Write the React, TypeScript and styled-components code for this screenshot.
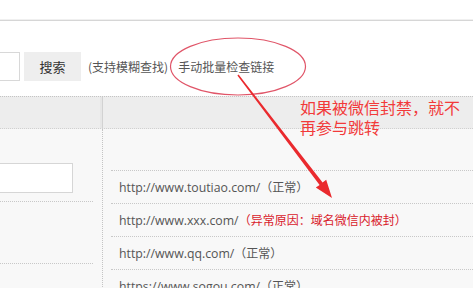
import React from "react";
import styled, { createGlobalStyle } from "styled-components";

const Global = createGlobalStyle`
  html, body { margin: 0; padding: 0; background: #ffffff; }
  body { font-family: "Open Sans", "Noto Sans CJK SC", sans-serif; overflow: hidden; }
  #root { width: 473px; height: 288px; position: relative; overflow: hidden; }
`;

const Page = styled.div`
  position: relative;
  width: 473px;
  height: 288px;
  overflow: hidden;
  background: #ffffff;
`;

const TopBar = styled.div`
  height: 19px;
  border-bottom: 1px solid #f0f0f0;
  box-shadow: 0 1px 0 #d6d6d6;
`;

const SearchRow = styled.div`
  display: flex;
  align-items: center;
  margin-top: 32px;
  height: 29px;
`;

const SearchInput = styled.div`
  box-sizing: border-box;
  width: 20px;
  height: 29px;
  background: #fff;
  border: 1px solid #d8d8d8;
  border-left: none;
`;

const SearchButton = styled.div`
  box-sizing: border-box;
  margin-left: 4px;
  width: 57px;
  height: 29px;
  background: #eeeeee;
  color: #333;
  font-size: 13px;
  font-family: "Noto Sans CJK SC", sans-serif;
  display: flex;
  align-items: center;
  justify-content: center;
`;

const Hint = styled.span<{ $gap: number }>`
  margin-left: ${(p) => p.$gap}px;
  font-size: 12px;
  color: #555;
  font-family: "Noto Sans CJK SC", sans-serif;
  white-space: nowrap;
`;

const HeaderBand = styled.div`
  margin-top: 15px;
  display: grid;
  grid-template-columns: 102px 1fr;
  height: 31px;
  background: #ededed;
  border-top: 1px dotted #c4c4c4;
  border-bottom: 1px dotted #d0d0d0;
`;

const HeaderCell = styled.div<{ $divider?: boolean }>`
  border-left: ${(p) => (p.$divider ? "1px solid #d2d2d2" : "none")};
  box-shadow: ${(p) => (p.$divider ? "-2px 0 0 #e6e6e6" : "none")};
`;

const Body = styled.div`
  display: grid;
  grid-template-columns: 102px 1fr;
  background: #f8f8f8;
  height: 200px;
`;

const LeftCol = styled.div`
  padding-right: 9px;
`;

const LeftBlock = styled.div<{ $h: number; $pt: number }>`
  box-sizing: border-box;
  height: ${(p) => p.$h}px;
  padding-top: ${(p) => p.$pt}px;
  border-bottom: 1px dotted #c8c8c8;
`;

const LeftInput = styled.div`
  box-sizing: border-box;
  width: 73px;
  height: 30px;
  background: #fff;
  border: 1px solid #d6d6d6;
  border-left: none;
`;

const RightCol = styled.div`
  border-left: 1px dotted #c4c4c4;
  padding: 41px 0 0 8px;
`;

const Row = styled.div`
  box-sizing: border-box;
  height: 33px;
  border-top: 1px dotted #c8c8c8;
  padding-left: 8px;
  line-height: 32px;
  font-size: 12.3px;
  color: #555;
  white-space: nowrap;
`;

const Status = styled.span<{ $error?: boolean }>`
  color: ${(p) => (p.$error ? "#d8212b" : "#555")};
  font-family: "Noto Sans CJK SC", sans-serif;
  font-size: 12px;
`;

const Overlay = styled.svg`
  position: absolute;
  left: 0;
  top: 0;
  width: 473px;
  height: 288px;
  pointer-events: none;
`;

const Note = styled.div`
  position: absolute;
  left: 300px;
  top: 97px;
  width: 165px;
  font-family: "Noto Sans CJK SC", sans-serif;
  font-size: 16px;
  line-height: 20px;
  color: #f23a3a;
`;

const rows = [
  { url: "http://www.toutiao.com/", status: "（正常）", error: false },
  { url: "http://www.xxx.com/", status: "（异常原因：域名微信内被封）", error: true },
  { url: "http://www.qq.com/", status: "（正常）", error: false },
  { url: "https://www.sogou.com/", status: "（正常）", error: false },
];

export default function App() {
  return (
    <Page>
      <Global />
      <TopBar />
      <SearchRow>
        <SearchInput />
        <SearchButton>搜索</SearchButton>
        <Hint $gap={7}>(支持模糊查找)</Hint>
        <Hint $gap={10}>手动批量检查链接</Hint>
      </SearchRow>
      <HeaderBand>
        <HeaderCell />
        <HeaderCell $divider />
      </HeaderBand>
      <Body>
        <LeftCol>
          <LeftBlock $h={73} $pt={34}>
            <LeftInput />
          </LeftBlock>
          <LeftBlock $h={62} $pt={0} />
        </LeftCol>
        <RightCol>
          {rows.map((r) => (
            <Row key={r.url}>
              {r.url}
              <Status $error={r.error}>{r.status}</Status>
            </Row>
          ))}
        </RightCol>
      </Body>
      <Overlay viewBox="0 0 473 288">
        <ellipse cx="238" cy="66.5" rx="67.5" ry="28.5" fill="none" stroke="#e05568" strokeWidth="1.2" />
        <polygon
          fill="#ea2a2e"
          points="238.6,74.5 322.6,182.4 326.2,179.8 332,198 315.8,187.6 319.6,185 237.4,75.5"
        />
      </Overlay>
      <Note>如果被微信封禁，就不再参与跳转</Note>
    </Page>
  );
}
